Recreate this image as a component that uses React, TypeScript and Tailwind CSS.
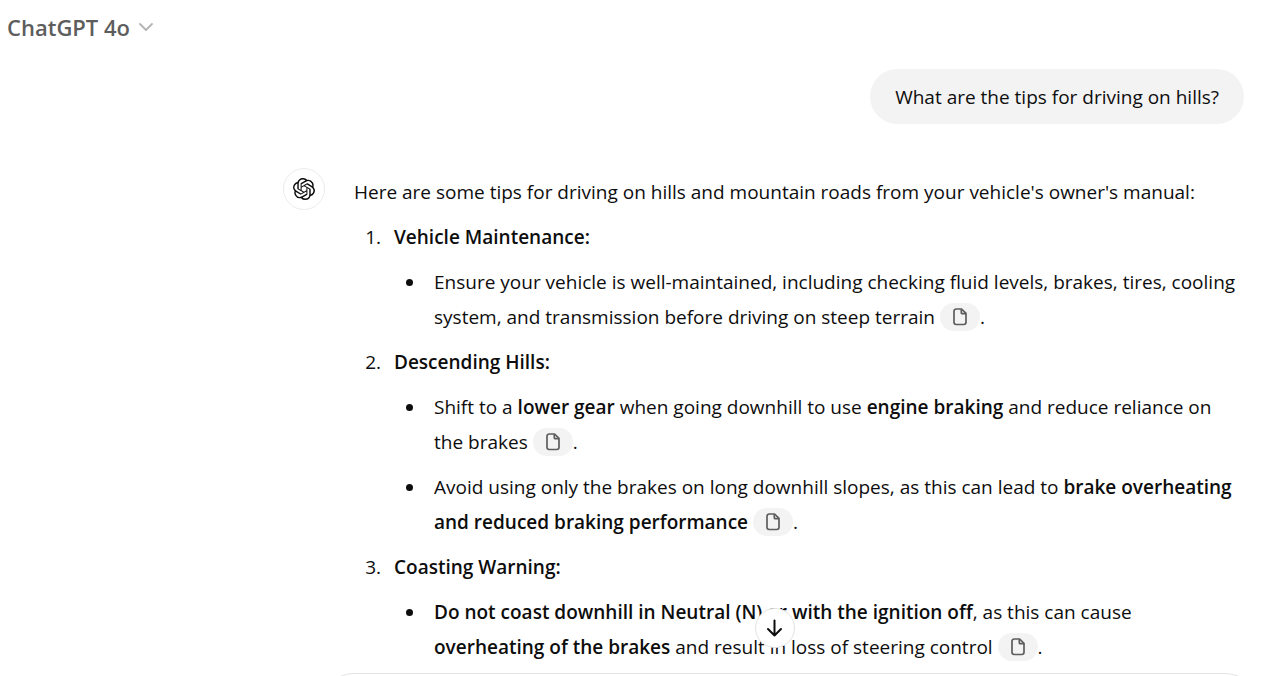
import type { ReactNode } from "react";
import { SiOpenai } from "react-icons/si";

function FileIcon() {
  return (
    <svg width="14" height="18" viewBox="0 0 14 18" fill="none" stroke="#5d5d5d" strokeWidth="1.7" strokeLinejoin="round" aria-hidden="true">
      <path d="M8.6 1H3.2A2.2 2.2 0 0 0 1 3.2V14.3a2.2 2.2 0 0 0 2.2 2.2h7.6a2.2 2.2 0 0 0 2.2-2.2V5.4Z" />
      <path d="M8.3 1.2V4.7a1 1 0 0 0 1 1H13" />
    </svg>
  );
}

function Source() {
  return (
    <button type="button" aria-label="View source" className="inline-flex h-7 w-10 items-center justify-center rounded-full bg-[#f3f3f3] align-[-2px]">
      <FileIcon />
    </button>
  );
}

function Bold({ children }: { children: ReactNode }) {
  return <strong className="font-semibold">{children}</strong>;
}

function Tip({ title, children }: { title: string; children: ReactNode }) {
  return (
    <li className="pl-2">
      <Bold>{title}</Bold>
      <ul className="mt-2.5 list-disc space-y-2.5 pl-8">{children}</ul>
    </li>
  );
}

export default function App() {
  return (
    <div className="relative flex h-screen flex-col overflow-hidden bg-white font-['Open_Sans','Noto_Sans',sans-serif] text-[19px] leading-[35px] text-[#0d0d0d]">
      <header className="flex h-[54px] shrink-0 items-center px-[7px]">
        <button type="button" className="flex items-center gap-2 text-[22px] font-semibold text-[#5d5d5d]">
          ChatGPT 4o
          <svg width="16" height="10" viewBox="0 0 16 10" fill="none" stroke="#b4b4b4" strokeWidth="1.8" strokeLinecap="round" strokeLinejoin="round" aria-hidden="true">
            <path d="M2 2l6 6 6-6" />
          </svg>
        </button>
      </header>
      <main className="min-h-0 flex-1 overflow-hidden pr-[27px] pt-[15px]">
        <div className="ml-auto max-w-[961px]">
          <div className="flex justify-end">
            <p className="rounded-[28px] bg-[#f3f3f3] px-[25px] pb-[9px] pt-[11px]">What are the tips for driving on hills?</p>
          </div>
          <article className="flex items-start pt-11">
            <div className="mr-[29px] flex size-[42px] shrink-0 items-center justify-center rounded-full border border-[#ececec]">
              <SiOpenai size={22} />
            </div>
            <div className="min-w-0 flex-1 whitespace-nowrap pt-[7px]">
              <p>Here are some tips for driving on hills and mountain roads from your vehicle's owner's manual:</p>
              <ol className="mt-2.5 list-decimal space-y-2.5 pl-8">
                <Tip title="Vehicle Maintenance:">
                  <li className="pl-2">
                    Ensure your vehicle is well-maintained, including checking fluid levels, brakes, tires, cooling<br />
                    system, and transmission before driving on steep terrain <Source />.
                  </li>
                </Tip>
                <Tip title="Descending Hills:">
                  <li className="pl-2">
                    Shift to a <Bold>lower gear</Bold> when going downhill to use <Bold>engine braking</Bold> and reduce reliance on<br />
                    the brakes <Source />.
                  </li>
                  <li className="pl-2">
                    Avoid using only the brakes on long downhill slopes, as this can lead to <Bold>brake overheating<br />
                    and reduced braking performance</Bold> <Source />.
                  </li>
                </Tip>
                <Tip title="Coasting Warning:">
                  <li className="pl-2">
                    <Bold>Do not coast downhill in Neutral (N) or with the ignition off</Bold>, as this can cause<br />
                    <Bold>overheating of the brakes</Bold> and result in loss of steering control <Source />.
                  </li>
                </Tip>
              </ol>
            </div>
          </article>
        </div>
      </main>
      <button type="button" aria-label="Scroll to bottom" className="absolute bottom-7 left-[755px] flex size-10 items-center justify-center rounded-full border border-[#e3e3e3] bg-white">
        <svg width="18" height="20" viewBox="0 0 18 20" fill="none" stroke="#0d0d0d" strokeWidth="2" strokeLinecap="round" strokeLinejoin="round" aria-hidden="true">
          <path d="M8.5 2.5v15M2 11l6.500 6.500L15 11" />
        </svg>
      </button>
      <footer className="h-[3px] shrink-0 overflow-hidden pl-[319px] pr-[11px]">
        <div className="h-20 rounded-[35px] border border-[#e3e3e3]" />
      </footer>
    </div>
  );
}
